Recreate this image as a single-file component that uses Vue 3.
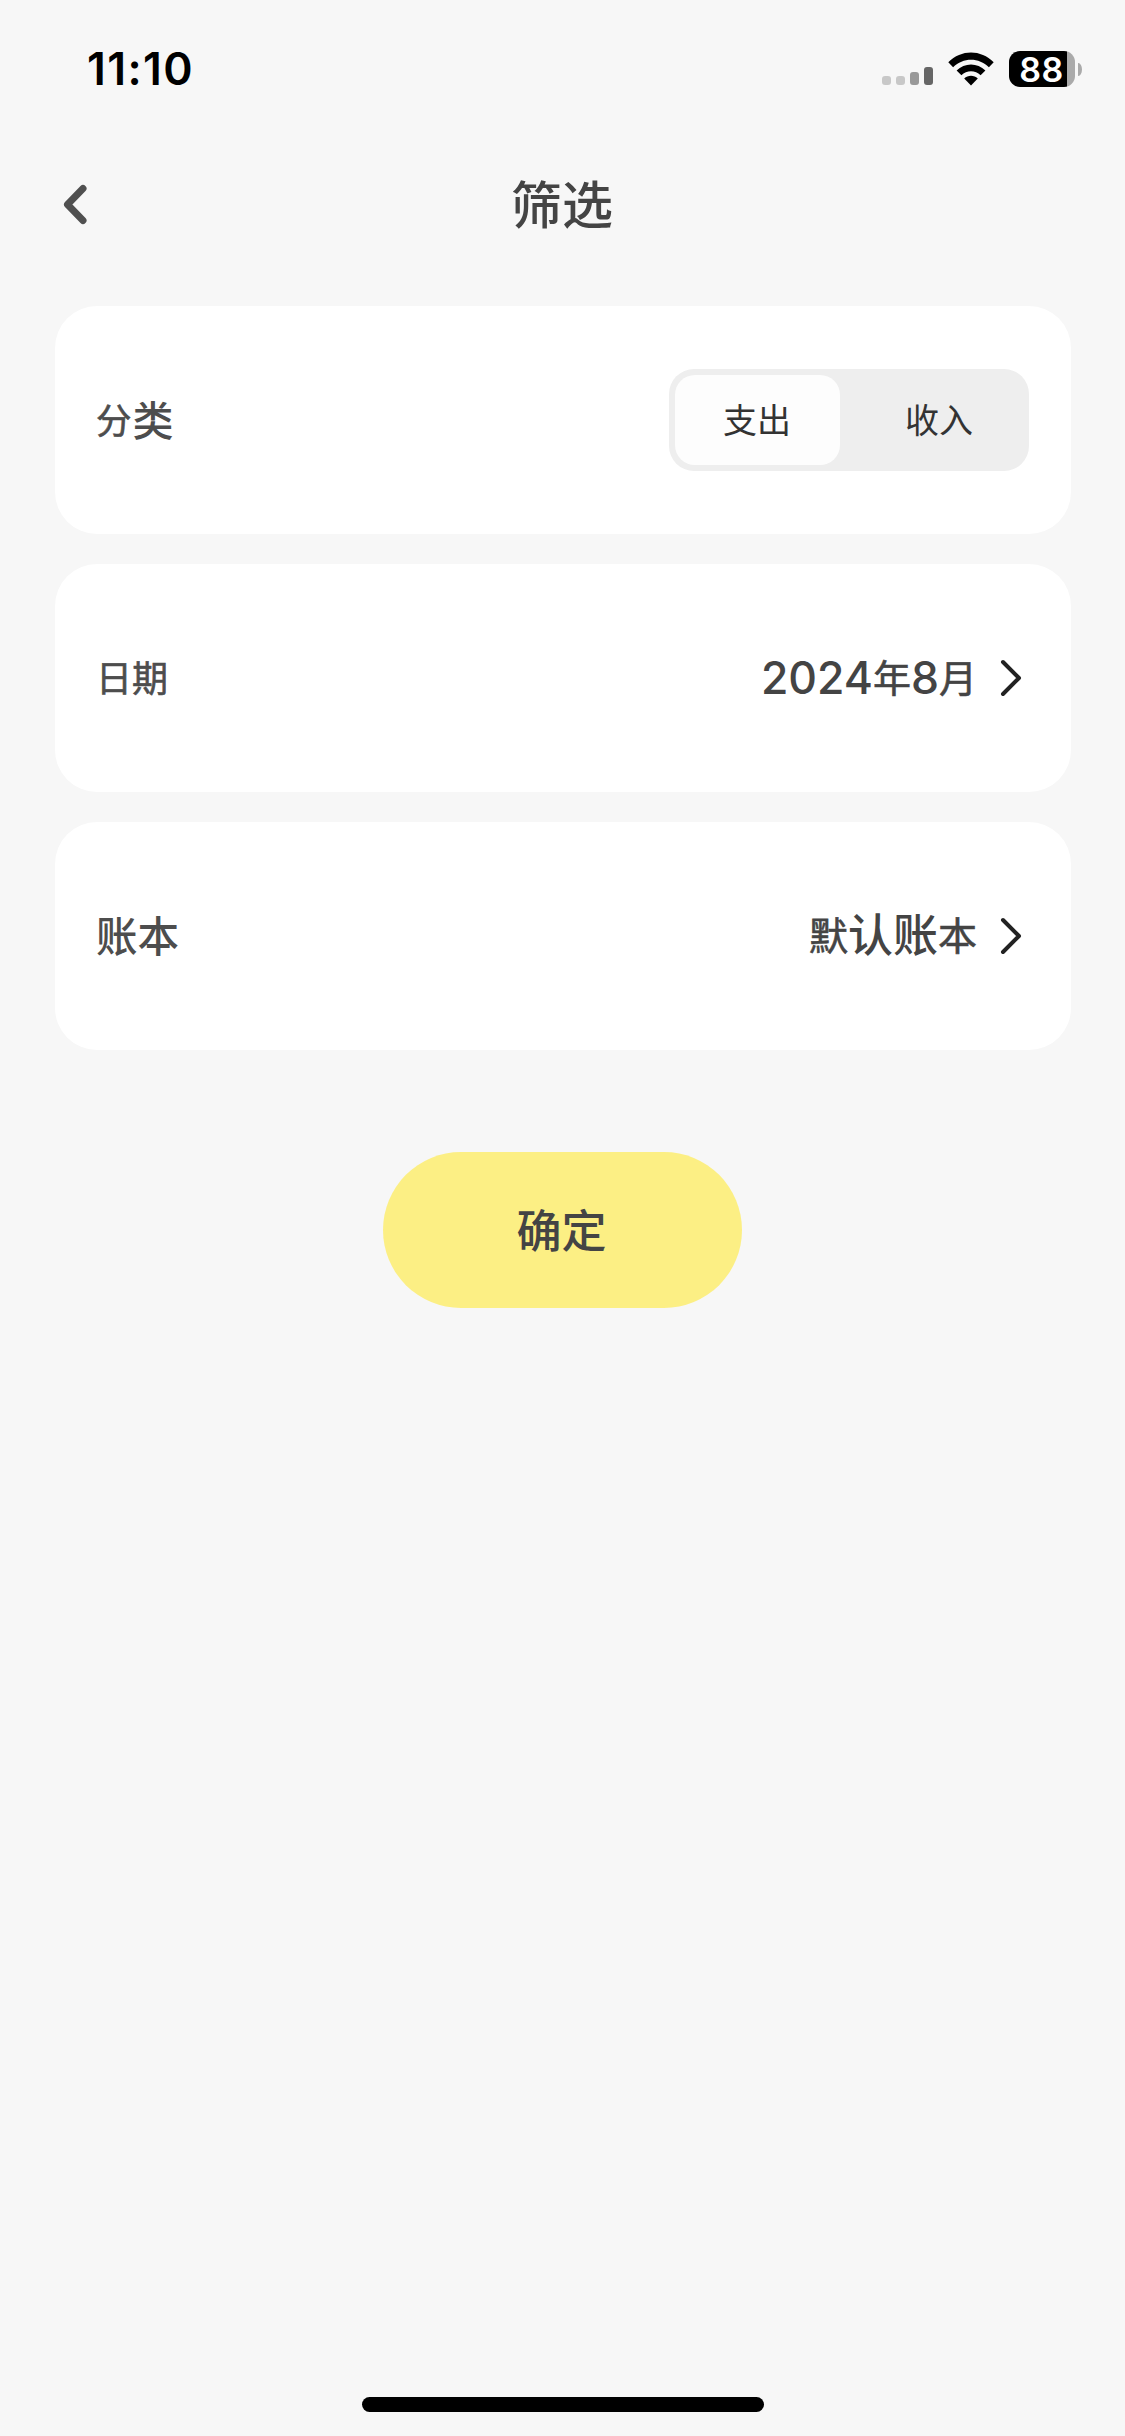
<script setup>
import { ref } from 'vue'

const types = ['支出', '收入']
const active = ref(0)
const bars = [9, 9, 13, 18]
</script>

<template>
  <div class="screen">
    <header class="status">
      <span class="time">11:10</span>
      <div class="indicators">
        <div class="signal">
          <i v-for="(h, i) in bars" :key="i" :class="'bar b' + i" :style="{ height: h + 'px' }"></i>
        </div>
        <svg class="wifi" width="46" height="34" viewBox="0 0 46 34">
          <path d="M0.3 10.3C13 -2.9 33 -2.9 45.7 10.3L40.9 15.3C31 5.3 15 5.3 5.1 15.3Z" />
          <path d="M8.6 18.5C16.5 10.5 29.5 10.5 37.4 18.5L32.6 23.2C27.3 18 18.7 18 13.4 23.2Z" />
          <path d="M16.2 26.6C20 22.9 26 22.9 29.8 26.6L23 33.4Z" />
        </svg>
        <div class="battery"><span>88</span></div>
        <i class="nub"></i>
      </div>
    </header>

    <nav class="nav">
      <svg class="back" width="26" height="42" viewBox="0 0 26 42">
        <path d="M20 4.5L4.5 20.5L20 36.5" />
      </svg>
      <h1>筛选</h1>
    </nav>

    <main>
      <section class="card">
        <span class="label kind"><span class="fen">分</span><span class="lei">类</span></span>
        <div class="segment">
          <button
            v-for="(t, i) in types"
            :key="t"
            :class="{ on: active === i }"
            @click="active = i"
          >{{ t }}</button>
        </div>
      </section>

      <section class="card">
        <span class="label date">日期</span>
        <div class="value">
          <span class="month"><b>2024</b><span class="unit">年</span><b>8</b><span class="unit">月</span></span>
          <svg class="more" width="24" height="40" viewBox="0 0 24 40">
            <path d="M4 4L20 20L4 36" />
          </svg>
        </div>
      </section>

      <section class="card">
        <span class="label book">账本</span>
        <div class="value">
          <span class="ledger"><span class="unit">默</span><span class="big">认账</span><span class="unit">本</span></span>
          <svg class="more" width="24" height="40" viewBox="0 0 24 40">
            <path d="M4 4L20 20L4 36" />
          </svg>
        </div>
      </section>
    </main>

    <button class="confirm">确定</button>
    <div class="home"></div>
  </div>
</template>

<style>
body {
  background: #f7f7f7;
}
</style>

<style scoped>
.screen {
  width: 1125px;
  height: 2436px;
  box-sizing: border-box;
  display: flex;
  flex-direction: column;
  background: #f7f7f7;
  color: #444;
  font-family: Inter, "Noto Sans CJK SC", sans-serif;
  overflow: hidden;
}
button {
  border: 0;
  margin: 0;
  padding: 0;
  font: inherit;
  color: inherit;
  background: none;
}
.status {
  display: flex;
  justify-content: space-between;
  height: 138px;
  padding: 0 43px 0 87px;
  box-sizing: border-box;
  color: #000;
}
.time {
  margin-top: 43px;
  font-size: 44.5px;
  line-height: 52px;
  font-weight: 600;
  letter-spacing: 1.4px;
}
.indicators {
  display: flex;
  align-items: flex-start;
}
.signal {
  display: flex;
  align-items: flex-end;
  gap: 5px;
  height: 85px;
}
.bar {
  width: 9px;
  border-radius: 3px;
}
.b0, .b1 { background: #c8c8c8; }
.b2 { background: #999; }
.b3 { background: #666; }
.wifi {
  margin: 52px 0 0 15px;
}
.battery {
  width: 66px;
  height: 36px;
  margin: 51px 0 0 15px;
  border-radius: 11px;
  background: linear-gradient(to right, #000 58px, #aaa 58px);
}
.battery span {
  display: block;
  width: 65px;
  text-align: center;
  color: #fff;
  font-size: 34px;
  line-height: 37px;
  font-weight: 600;
  letter-spacing: 0.4px;
}
.nub {
  width: 4px;
  height: 13px;
  margin: 63px 0 0 3px;
  border-radius: 0 4px 4px 0 / 0 7px 7px 0;
  background: #aaa;
}
.nav {
  display: flex;
  align-items: center;
  height: 132px;
  padding: 2px 60px 0 63px;
  box-sizing: border-box;
}
.back {
  fill: none;
  stroke: #505050;
  stroke-width: 7px;
  stroke-linecap: round;
  stroke-linejoin: round;
}
h1 {
  flex: 1;
  margin: 0 30px 0 0;
  padding-top: 2px;
  text-align: center;
  font-size: 51px;
  line-height: 60px;
  font-weight: 500;
}
main {
  display: flex;
  flex-direction: column;
  gap: 30px;
  margin: 36px 54px 0 55px;
}
.card {
  display: flex;
  align-items: center;
  justify-content: space-between;
  height: 228px;
  padding: 0 42px 0 41px;
  box-sizing: border-box;
  border-radius: 42px;
  background: #fff;
}
.label {
  color: #4d4d4d;
  white-space: nowrap;
  line-height: 56px;
}
.kind {
  display: flex;
  align-items: center;
  padding-top: 1px;
}
.fen {
  padding-top: 2px;
  font-size: 35.5px;
  -webkit-text-stroke: 0.6px #4d4d4d;
}
.lei {
  margin-left: 1px;
  font-size: 41px;
  font-weight: 500;
}
.date {
  padding-top: 2px;
  font-size: 36px;
  -webkit-text-stroke: 0.6px #4d4d4d;
}
.book {
  padding-top: 1px;
  font-size: 41.5px;
  font-weight: 500;
}
.segment {
  display: flex;
  width: 360px;
  height: 102px;
  padding: 6px;
  box-sizing: border-box;
  border-radius: 25px;
  background: #eee;
}
.segment button {
  flex: 1;
  height: 90px;
  padding-left: 15px;
  border-radius: 20px;
  color: #333;
  font-size: 34px;
  line-height: 92px;
}
.segment .on {
  flex: none;
  width: 165px;
  padding-left: 0;
  padding-right: 1px;
  background: #fdfdfd;
}
.value {
  display: flex;
  align-items: center;
  gap: 22px;
  margin-right: 6px;
}
.value > span {
  white-space: nowrap;
  line-height: 56px;
}
.month {
  padding-top: 2px;
  font-size: 38px;
  -webkit-text-stroke: 0.6px #444;
}
.month b {
  font-size: 44.5px;
  font-weight: 500;
  -webkit-text-stroke: 0;
}
.unit {
  vertical-align: 2px;
}
.ledger {
  padding-top: 2px;
  font-size: 39px;
  -webkit-text-stroke: 0.6px #444;
}
.big {
  font-size: 45px;
  font-weight: 500;
  -webkit-text-stroke: 0;
}
.more {
  fill: none;
  stroke: #222;
  stroke-width: 4px;
  stroke-linecap: round;
  stroke-linejoin: round;
}
.confirm {
  width: 359px;
  height: 156px;
  margin: 102px 0 0 383px;
  padding-right: 2px;
  border-radius: 78px;
  background: #fcef84;
  font-size: 45px;
  line-height: 159px;
  font-weight: 500;
}
.home {
  width: 402px;
  height: 15px;
  margin: auto auto 24px 362px;
  border-radius: 8px;
  background: #000;
}
</style>
